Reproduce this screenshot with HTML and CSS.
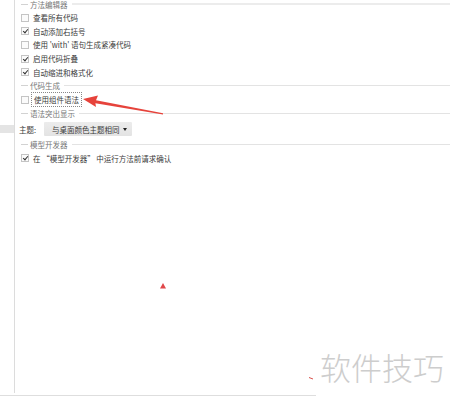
FILE: index.html
```html
<!DOCTYPE html>
<html lang="zh-CN">
<head>
    <meta charset="UTF-8">
    <meta name="viewport" content="width=device-width, initial-scale=1.0">
    <title>选项</title>
    <link rel="stylesheet" href="styles.css">
</head>
<body>

    <div class="window">
        <div class="sidebar">
            <div class="sidebar-item"></div>
        </div>

        <div class="panel">
            <div class="group-title first"><span>方法编辑器</span></div>
            <div class="row"><span class="box"></span>查看所有代码</div>
            <div class="row"><span class="box checked"></span>自动添加右括号</div>
            <div class="row"><span class="box"></span>使用 'with' 语句生成紧凑代码</div>
            <div class="row"><span class="box checked"></span>启用代码折叠</div>
            <div class="row"><span class="box checked"></span>自动缩进和格式化</div>

            <div class="group-title"><span>代码生成</span></div>
            <div class="row"><span class="box"></span><span class="focus">使用组件语法</span></div>

            <div class="group-title"><span>语法突出显示</span></div>
            <div class="theme-row">
                <span class="theme-label">主题:</span>
                <div class="select">与桌面颜色主题相同<span class="caret"></span></div>
            </div>

            <div class="group-title"><span>模型开发器</span></div>
            <div class="row"><span class="box checked"></span>在 “模型开发器” 中运行方法前请求确认</div>
        </div>
    </div>

    <!-- annotation drawn over the screenshot -->
    <svg class="arrow" width="450" height="398" viewBox="0 0 450 398">
        <polygon points="83,99 98,95.5 96,100.2 163,113.2 163,114.6 95.4,103.2 96,107 83,99" fill="#e6433b"/>
        <polygon points="160,288.5 163,283 166,288.5" fill="#e0474a"/>
        <line x1="309" y1="377.5" x2="313" y2="379" stroke="#d9504a" stroke-width="1"/>
    </svg>

    <div class="watermark">软件技巧</div>

</body>
</html>
```

FILE: styles.css
```css
body {
    margin: 0;
    font-family: "Noto Sans CJK SC", "Liberation Sans", sans-serif;
    font-size: 7.5px;
    color: #3a3a3a;
    background: #fff;
    width: 450px;
    height: 398px;
    overflow: hidden;
    position: relative;
}

.window {
    display: flex;
    height: 395px;
    border-bottom: 1px solid #dedede;
}

.sidebar {
    width: 15px;
    height: 393px;
    border-right: 1px solid #dcdcdc;
    padding-top: 125px;
    box-sizing: border-box;
}

.sidebar-item {
    height: 8px;
    background: #e4e4e4;
}

.panel {
    flex: 1;
    padding-left: 6px;
    margin-top: -3px;
}

.group-title {
    display: flex;
    align-items: center;
    height: 14px;
    color: #777;
}

.group-title::before {
    content: "";
    width: 7px;
    height: 1px;
    background: #d2d2d2;
    margin-right: 2px;
}

.group-title::after {
    content: "";
    flex: 1;
    height: 1px;
    background: #e3e3e3;
    margin-left: 4px;
}

.group-title.first::after {
    height: 2px;
    background: #ececec;
}

.row {
    display: flex;
    align-items: center;
    height: 13.6px;
    white-space: nowrap;
}

.box {
    width: 8px;
    height: 8px;
    box-sizing: border-box;
    border: 1px solid #c4c4c4;
    background: #fbfbfb;
    margin-right: 4px;
    position: relative;
}

.box.checked::after {
    content: "";
    position: absolute;
    left: 1.5px;
    top: 0;
    width: 2px;
    height: 4px;
    border-right: 1.2px solid #333;
    border-bottom: 1.2px solid #333;
    transform: rotate(40deg);
}

.focus {
    outline: 1px dotted #888;
    outline-offset: 1px;
    padding: 0 1px;
}

.theme-row {
    display: flex;
    align-items: center;
    height: 17px;
    margin-left: -2px;
}

.theme-label {
    width: 25px;
}

.select {
    width: 88px;
    height: 14px;
    box-sizing: border-box;
    padding-left: 8px;
    display: flex;
    align-items: center;
    background: linear-gradient(#ececec, #e3e3e3);
    border-radius: 1px;
    position: relative;
}

.caret {
    position: absolute;
    right: 5px;
    top: 6px;
    border-left: 2px solid transparent;
    border-right: 2px solid transparent;
    border-top: 3px solid #222;
}

.arrow {
    position: absolute;
    left: 0;
    top: 0;
}

.watermark {
    position: absolute;
    left: 316px;
    top: 340px;
    padding: 0 6px 0 4px;
    height: 58px;
    box-sizing: border-box;
    padding-top: 4px;
    font-size: 31px;
    font-weight: 300;
    color: #cdcdcd;
    background: #fff;
}
```
